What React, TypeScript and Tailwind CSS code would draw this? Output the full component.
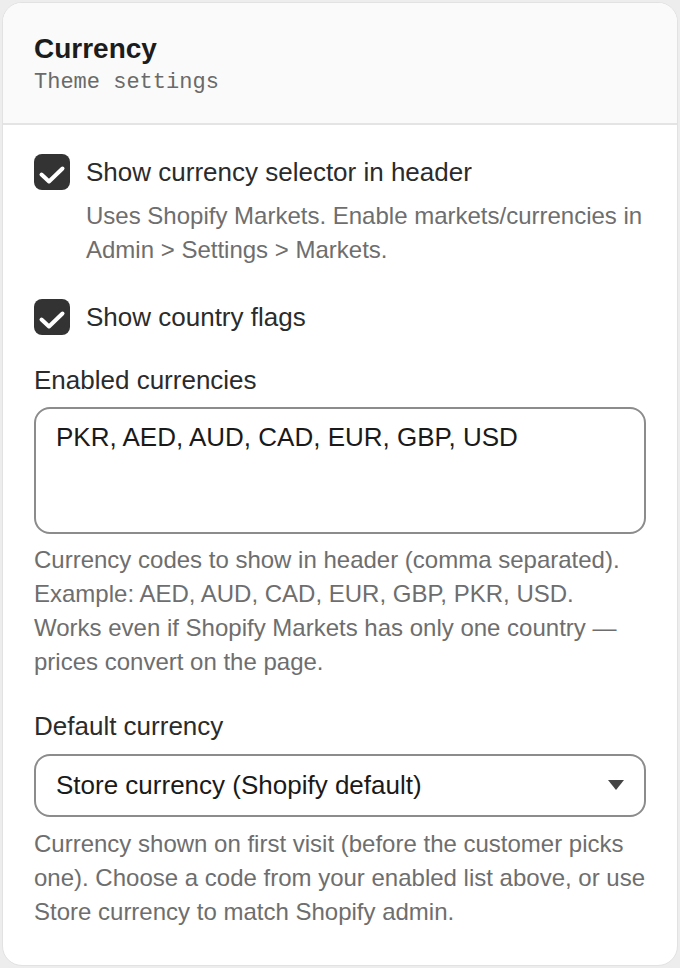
import { useState } from "react";

const sans = "font-['Liberation_Sans',Arial,sans-serif]";

function Check({ checked, onToggle }: { checked: boolean; onToggle: () => void }) {
  return (
    <button
      type="button"
      onClick={onToggle}
      className={`w-[36px] h-[36px] shrink-0 rounded-[8px] flex items-center justify-center ${
        checked ? "bg-[#333333]" : "bg-white border-2 border-[#8c8c8c]"
      }`}
    >
      {checked && (
        <svg viewBox="0 0 36 36" className="w-[36px] h-[36px]">
          <path
            d="M7.5 20.5 L15 27.5 L28.5 14.5"
            fill="none"
            stroke="#ffffff"
            strokeWidth={4}
            strokeLinecap="round"
            strokeLinejoin="round"
          />
        </svg>
      )}
    </button>
  );
}

export default function App() {
  const [selector, setSelector] = useState(true);
  const [flags, setFlags] = useState(true);

  return (
    <div className={`min-h-[968px] bg-[#ededed] p-[2px] ${sans}`}>
      <div className="rounded-[20px] border border-[#e2e2e2] bg-white overflow-hidden">
        {/* Header */}
        <div className="bg-[#fafafa] border-b-2 border-[#e4e4e4] px-[31px] pt-[29px] pb-[25px]">
          <h1 className="text-[28px] leading-[34px] font-bold text-[#1c1c1c]">Currency</h1>
          <p className="mt-[2px] font-['Liberation_Mono',monospace] text-[22px] leading-[30px] text-[#6a6a6a]">
            Theme settings
          </p>
        </div>

        {/* Body */}
        <div className="px-[31px] pt-[29px] pb-[36px]">
          <div className="flex items-center gap-[16px]">
            <Check checked={selector} onToggle={() => setSelector(!selector)} />
            <span className="text-[26px] leading-[34px] text-[#2b2b2b]">
              Show currency selector in header
            </span>
          </div>
          <p className="mt-[9px] pl-[52px] text-[24px] leading-[34px] text-[#6e6e6e]">
            Uses Shopify Markets. Enable markets/currencies in Admin &gt; Settings &gt; Markets.
          </p>

          <div className="mt-[32px] flex items-center gap-[16px]">
            <Check checked={flags} onToggle={() => setFlags(!flags)} />
            <span className="text-[26px] leading-[34px] text-[#2b2b2b]">Show country flags</span>
          </div>

          <label className="block mt-[28px] text-[26px] leading-[34px] text-[#2b2b2b]">
            Enabled currencies
          </label>
          <textarea
            defaultValue="PKR, AED, AUD, CAD, EUR, GBP, USD"
            className="mt-[10px] block w-full h-[127px] resize-none rounded-[16px] border-2 border-[#8c8c8c] bg-white px-[20px] pt-[12px] text-[26px] leading-[32px] text-[#1a1a1a] outline-none"
          />
          <p className="mt-[9px] text-[24px] leading-[34px] text-[#6e6e6e]">
            Currency codes to show in header (comma separated). Example: AED, AUD, CAD, EUR, GBP,
            PKR, USD. Works even if Shopify Markets has only one country — prices convert on the
            page.
          </p>

          <label className="block mt-[30px] text-[26px] leading-[34px] text-[#2b2b2b]">
            Default currency
          </label>
          <div className="relative mt-[11px]">
            <select className="block w-full h-[63px] appearance-none rounded-[16px] border-2 border-[#8c8c8c] bg-white pl-[20px] pr-[60px] text-[26px] text-[#1a1a1a] outline-none">
              <option>Store currency (Shopify default)</option>
              <option>PKR</option>
              <option>AED</option>
              <option>AUD</option>
              <option>CAD</option>
              <option>EUR</option>
              <option>GBP</option>
              <option>USD</option>
            </select>
            <svg
              viewBox="0 0 16 10"
              className="pointer-events-none absolute right-[22px] top-[26px] w-[16px] h-[10px]"
            >
              <path d="M0 0 L16 0 L8 10 Z" fill="#444444" />
            </svg>
          </div>
          <p className="mt-[10px] text-[24px] leading-[34px] text-[#6e6e6e]">
            Currency shown on first visit (before the customer picks one). Choose a code from your
            enabled list above, or use Store currency to match Shopify admin.
          </p>
        </div>
      </div>
    </div>
  );
}
